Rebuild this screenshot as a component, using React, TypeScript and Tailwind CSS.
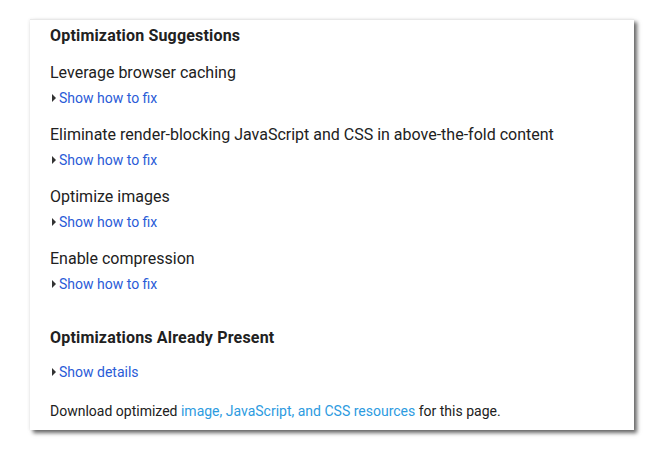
export default function App() {
  const items = [
    "Leverage browser caching",
    "Eliminate render-blocking JavaScript and CSS in above-the-fold content",
    "Optimize images",
    "Enable compression",
  ];

  const Toggle = ({ label }: { label: string }) => (
    <div className="flex items-center h-[18px] text-[14px] leading-[18px]">
      <span className="ml-[2px] mr-[3px] w-0 h-0 border-y-[4px] border-y-transparent border-l-[4px] border-l-[#333]" />
      <a className="text-[#2a5bd7] cursor-pointer">{label}</a>
    </div>
  );

  return (
    <div className="w-[664px] h-[452px] bg-white pt-[19px] pl-[30px] font-['Roboto',sans-serif]">
      <div className="w-[604px] h-[411px] bg-white border-t border-[#e8e8e8] shadow-[3px_3px_4px_rgba(0,0,0,0.6),-1px_0_3px_rgba(0,0,0,0.06)] pl-[20px] pt-[6px] text-[#212121]">
        <h2 className="text-[16px] leading-[20px] font-bold tracking-[0.18px]">Optimization Suggestions</h2>
        <div className="mt-[17px] flex flex-col gap-[18px]">
          {items.map((t) => (
            <div key={t}>
              <div className="text-[16px] leading-[20px]">{t}</div>
              <div className="mt-[6px]">
                <Toggle label="Show how to fix" />
              </div>
            </div>
          ))}
        </div>
        <h2 className="mt-[35px] text-[16px] leading-[20px] font-bold tracking-[0.18px]">Optimizations Already Present</h2>
        <div className="mt-[15px]">
          <Toggle label="Show details" />
        </div>
        <p className="mt-[21px] text-[14px] leading-[18px]">
          Download optimized{" "}
          <a className="text-[#2d9bdf] cursor-pointer">image, JavaScript, and CSS resources</a> for this page.
        </p>
      </div>
    </div>
  );
}
